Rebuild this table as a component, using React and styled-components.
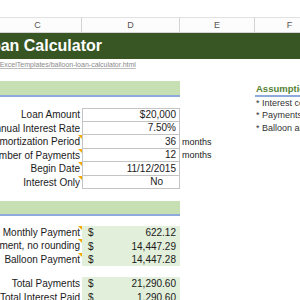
import React from 'react';
import styled, { createGlobalStyle } from 'styled-components';

const GlobalStyle = createGlobalStyle`
  html, body {
    margin: 0;
    padding: 0;
    background: #fff;
  }
  body {
    font-family: "Liberation Sans", Arial, sans-serif;
    color: #1a1a1a;
  }
`;

const Viewport = styled.div`
  width: 300px;
  height: 300px;
  overflow: hidden;
  background: #fff;
`;

// the sheet is scrolled so that column B sits off to the left
const Sheet = styled.div`
  margin-left: -110px;
  width: 470px;
  display: flex;
  flex-direction: column;
`;

const Row = styled.div`
  display: grid;
  grid-template-columns: 104px 88px 98px 75px 70px 40px;
  height: ${(p) => p.$h}px;
  flex: none;
`;

const ColHead = styled.div`
  border-top: 1px solid #e1e1e1;
  border-bottom: 1px solid #d4d4d4;
  border-right: 1px solid #d4d4d4;
  background: #fcfcfc;
  color: #555;
  font-size: 9px;
  display: flex;
  align-items: center;
  justify-content: center;
`;

const TitleBar = styled.div`
  grid-column: 1 / -1;
  background: #375623;
  color: #fff;
  font-size: 16px;
  font-weight: bold;
  padding-left: 28px;
  display: flex;
  align-items: center;
  white-space: nowrap;
`;

const LinkCell = styled.div`
  grid-column: 1 / -1;
  padding-left: 28px;
  font-size: 7px;
  line-height: 11px;
  color: #8a8a8a;
  white-space: nowrap;

  span {
    text-decoration: underline;
    text-decoration-color: #bdbdbd;
  }
`;

const SectionBar = styled.div`
  grid-column: 1 / 4;
  background: #c6e0b4;
  border-bottom: 2px solid #8ea9db;
  font-size: 10px;
  font-weight: bold;
  color: #c6e0b4;
  padding-left: 28px;
  display: flex;
  align-items: center;
`;

const AssumeHead = styled.div`
  grid-column: 5 / 7;
  border-bottom: 2px solid #8ea9db;
  color: #548235;
  font-size: 9.5px;
  font-weight: bold;
  padding-left: 1px;
  display: flex;
  align-items: flex-end;
  padding-bottom: 1px;
  white-space: nowrap;
`;

const Label = styled.div`
  grid-column: 1 / 3;
  position: relative;
  text-align: right;
  padding-right: 2px;
  font-size: 10px;
  line-height: ${(p) => p.$h}px;
  white-space: nowrap;

  ${(p) =>
    p.$note &&
    `
    &::after {
      content: '';
      position: absolute;
      top: 0;
      right: 0;
      border-top: 4px solid #f2a900;
      border-left: 4px solid transparent;
    }
  `}
`;

const Input = styled.div`
  grid-column: 3;
  border: 1px solid #c4c4c4;
  border-top: ${(p) => (p.$first ? '1px solid #c4c4c4' : 'none')};
  padding-right: ${(p) => p.$pad || 3}px;
  font-size: 10px;
  display: flex;
  align-items: center;
  justify-content: flex-end;
`;

const Unit = styled.div`
  grid-column: 4;
  font-size: 9px;
  padding-left: 2px;
  display: flex;
  align-items: center;
`;

const Note = styled.div`
  grid-column: 5 / 7;
  font-size: 9px;
  color: #333;
  padding-left: 1px;
  white-space: nowrap;
  display: flex;
  align-items: center;
`;

const Money = styled.div`
  grid-column: 3;
  background: #e2efda;
  font-size: 10px;
  display: flex;
  align-items: center;
  justify-content: space-between;
  padding: 0 4px 0 6px;
`;

const inputs = [
  { label: 'Loan Amount', value: '$20,000', note: '* Payments made monthly' },
  { label: 'Annual Interest Rate', value: '7.50%', note: '* Balloon amount due at end of term' },
  { label: 'Amortization Period', value: '36', unit: 'months', flag: true },
  { label: 'Number of Payments', value: '12', unit: 'months', flag: true },
  { label: 'Begin Date', value: '11/12/2015', flag: true },
  { label: 'Interest Only', value: 'No', flag: true, pad: 16 },
];

const payments = [
  { label: 'Monthly Payment', value: '622.12', flag: true },
  { label: 'Balloon Payment, no rounding', value: '14,447.29', flag: true },
  { label: 'Balloon Payment', value: '14,447.28', flag: true },
];

const totals = [
  { label: 'Total Payments', value: '21,290.60' },
  { label: 'Total Interest Paid', value: '1,290.60' },
];

const IN_H = 13.5;
const OUT_H = 13.4;

const App = () => (
  <Viewport>
    <GlobalStyle />
    <Sheet>
      <Row $h={17} />
      <Row $h={16}>
        <ColHead>B</ColHead>
        <ColHead>C</ColHead>
        <ColHead>D</ColHead>
        <ColHead>E</ColHead>
        <ColHead>F</ColHead>
        <ColHead>G</ColHead>
      </Row>
      <Row $h={26}>
        <TitleBar>Balloon Loan Calculator</TitleBar>
      </Row>
      <Row $h={11}>
        <LinkCell>
          <span>https://www.vertex42.com/ExcelTemplates/balloon-loan-calculator.html</span>
        </LinkCell>
      </Row>
      <Row $h={11} />
      <Row $h={16}>
        <SectionBar>Loan</SectionBar>
        <AssumeHead>Assumptions</AssumeHead>
      </Row>
      <Row $h={11}>
        <Note>* Interest compounded monthly</Note>
      </Row>
      {inputs.map((r, i) => (
        <Row $h={IN_H} key={r.label}>
          <Label $h={IN_H} $note={r.flag}>{r.label}</Label>
          <Input $first={i === 0} $pad={r.pad}>{r.value}</Input>
          {r.unit && <Unit>{r.unit}</Unit>}
          {r.note && <Note>{r.note}</Note>}
        </Row>
      ))}
      <Row $h={12} />
      <Row $h={15}>
        <SectionBar>Pay</SectionBar>
      </Row>
      <Row $h={10} />
      {payments.map((r) => (
        <Row $h={OUT_H} key={r.label}>
          <Label $h={OUT_H} $note={r.flag}>{r.label}</Label>
          <Money>
            <span>$</span>
            <span>{r.value}</span>
          </Money>
        </Row>
      ))}
      <Row $h={11} />
      {totals.map((r) => (
        <Row $h={OUT_H} key={r.label}>
          <Label $h={OUT_H}>{r.label}</Label>
          <Money>
            <span>$</span>
            <span>{r.value}</span>
          </Money>
        </Row>
      ))}
    </Sheet>
  </Viewport>
);

export default App;
